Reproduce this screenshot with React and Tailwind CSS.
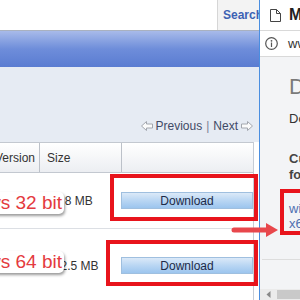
import React from 'react';

function HollowArrow({ dir }) {
  const pts = dir === 'left'
    ? '0.5,5 5.5,0.5 5.5,3 11.5,3 11.5,7 5.5,7 5.5,9.5'
    : '11.5,5 6.5,0.5 6.5,3 0.5,3 0.5,7 6.5,7 6.5,9.5';
  return (
    <svg width="12" height="10" viewBox="0 0 12 10">
      <polygon points={pts} fill="#fbfbfb" stroke="#a3a7ae" strokeWidth="1" />
    </svg>
  );
}

function DownloadButton() {
  return (
    <div className="w-full h-[17px] flex items-center justify-center bg-linear-to-b from-[#dbe9f8] via-[#b9d6f3] to-[#9cc5ee] border border-[#9fbfdf] text-[12px] text-[#1c2a48]">
      Download
    </div>
  );
}

function Label({ children, top }) {
  return (
    <div className={`absolute left-0 ${top} w-[64px] flex justify-end`}>
      <span className="whitespace-nowrap bg-white rounded-[5px] pr-[2px] text-[19px] leading-[22px] text-[#e43a40] shadow-[1px_2px_3px_rgba(0,0,0,0.4)]">
        {children}
      </span>
    </div>
  );
}

export default function App() {
  return (
    <div className="relative w-[300px] h-[300px] overflow-hidden flex bg-white font-['Liberation_Sans',Arial,sans-serif]">
      {/* main page */}
      <div className="w-[259px] flex flex-col bg-white">
        <div className="h-[30px] flex justify-end">
          <div className="w-[42px] h-full bg-[#f3f3f3] border-l border-[#d6d6d6] flex items-center pl-[5px] overflow-hidden">
            <span className="text-[12px] font-bold text-[#3d62b3] whitespace-nowrap">Search</span>
          </div>
        </div>
        <div className="h-px bg-[#a9b1bf]" />
        <div className="h-[36px] bg-linear-to-b from-[#a8bae9] via-[#6e8dda] to-[#5a7cd1]" />
        <div className="h-[75px] bg-[#e6ebf3] flex items-end justify-end pr-[6px] pb-[9px]">
          <div className="flex items-center gap-[3px] text-[12px] leading-[14px] text-[#3f4a66]">
            <HollowArrow dir="left" />
            <span>Previous</span>
            <span className="text-[#7a8294] px-[1px]">|</span>
            <span>Next</span>
            <HollowArrow dir="right" />
          </div>
        </div>

        <div className="flex-1 flex flex-col w-[254px] border-r border-[#c6ccd5]">
          <div className="h-[31px] flex bg-linear-to-b from-white to-[#eceef2] border-y border-[#c3c8d0] text-[12px] text-[#333]">
            <div className="w-[40px] border-r border-[#bcc1c9] flex items-center overflow-hidden">
              <span className="-ml-[5px]">Version</span>
            </div>
            <div className="w-[82px] border-r border-[#bcc1c9] flex items-center pl-[7px]">Size</div>
            <div className="flex-1" />
          </div>

          <div className="relative h-[56px] flex items-center border-b border-[#dcdfe4] text-[12px] text-[#333]">
            <div className="w-[40px]" />
            <div className="w-[81px] pl-[8px]">28.8 MB</div>
            <div className="flex-1"><DownloadButton /></div>
            <div className="absolute left-[110px] top-[1px] w-[148px] h-[47px] border-4 border-[#e8141c]" />
            <Label top="top-[19px]">Windows 32 bit</Label>
          </div>

          <div className="relative flex-1 flex items-start pt-[28px] text-[12px] text-[#333]">
            <div className="w-[40px]" />
            <div className="w-[81px] pl-[8px]">112.5 MB</div>
            <div className="flex-1"><DownloadButton /></div>
            <div className="absolute left-[106px] top-[11px] w-[152px] h-[46px] border-4 border-[#e8141c]" />
            <Label top="top-[22px]">Windows 64 bit</Label>
          </div>
        </div>
      </div>

      {/* browser side panel */}
      <div className="w-[41px] flex flex-col border-l border-[#4a8ee0] bg-[#f3f4f6] overflow-hidden">
        <div className="h-[31px] shrink-0 bg-white border-b border-[#d9d9d9] flex items-center pl-[10px] gap-[8px]">
          <svg width="11" height="13" viewBox="0 0 11 13" className="shrink-0">
            <path d="M0.5 0.5h6l4 4v8h-10z M6.5 0.5v4h4" fill="none" stroke="#444" strokeWidth="1" />
          </svg>
          <span className="text-[16px] font-bold text-[#222] whitespace-nowrap">Mi</span>
        </div>
        <div className="h-[26px] shrink-0 bg-white border-b border-[#d9d9d9] flex items-center pl-[5px] gap-[10px]">
          <svg width="13" height="13" viewBox="0 0 13 13" className="shrink-0">
            <circle cx="6.5" cy="6.5" r="5.8" fill="none" stroke="#555" strokeWidth="1.2" />
            <circle cx="6.5" cy="3.8" r="0.9" fill="#555" />
            <rect x="5.9" y="5.5" width="1.2" height="4.5" fill="#555" />
          </svg>
          <span className="text-[13px] text-[#333] whitespace-nowrap">www</span>
        </div>
        <div className="pl-[29px] mt-[17px] text-[22px] leading-[26px] text-[#7a7a7a] whitespace-nowrap">Do</div>
        <div className="pl-[29px] mt-[11px] text-[13px] leading-[16px] text-[#333] whitespace-nowrap">Do</div>
        <div className="pl-[29px] mt-[24px] text-[13px] leading-[16px] font-bold text-[#444] whitespace-nowrap">
          <div>Cu</div>
          <div>fo</div>
        </div>
        <div className="ml-[20px] mt-[6px] w-[40px] shrink-0 border-4 border-[#e8141c] pl-[5px] pt-[8px] text-[13px] leading-[15px] text-[#4f6fb0] whitespace-nowrap">
          <div>wi</div>
          <div>x6</div>
        </div>
        <div className="mt-[24px] ml-[2px] border-t border-[#dddddd]" />
        <div className="mt-auto h-[11px] bg-[#ebebeb] flex items-center pl-[6px] gap-[6px]">
          <svg width="5" height="7" viewBox="0 0 5 7"><polygon points="4.5,0 0.5,3.5 4.5,7" fill="#888" /></svg>
          <div className="flex-1 h-[9px] bg-[#c9c9c9]" />
        </div>
      </div>

      {/* annotation arrow */}
      <svg className="absolute left-[230px] top-[222px]" width="50" height="16" viewBox="0 0 50 16">
        <line x1="4" y1="8" x2="38" y2="8" stroke="#e8474c" strokeWidth="5" strokeLinecap="round" />
        <polygon points="36,1 48,8 36,15" fill="#e8474c" />
      </svg>
    </div>
  );
}
